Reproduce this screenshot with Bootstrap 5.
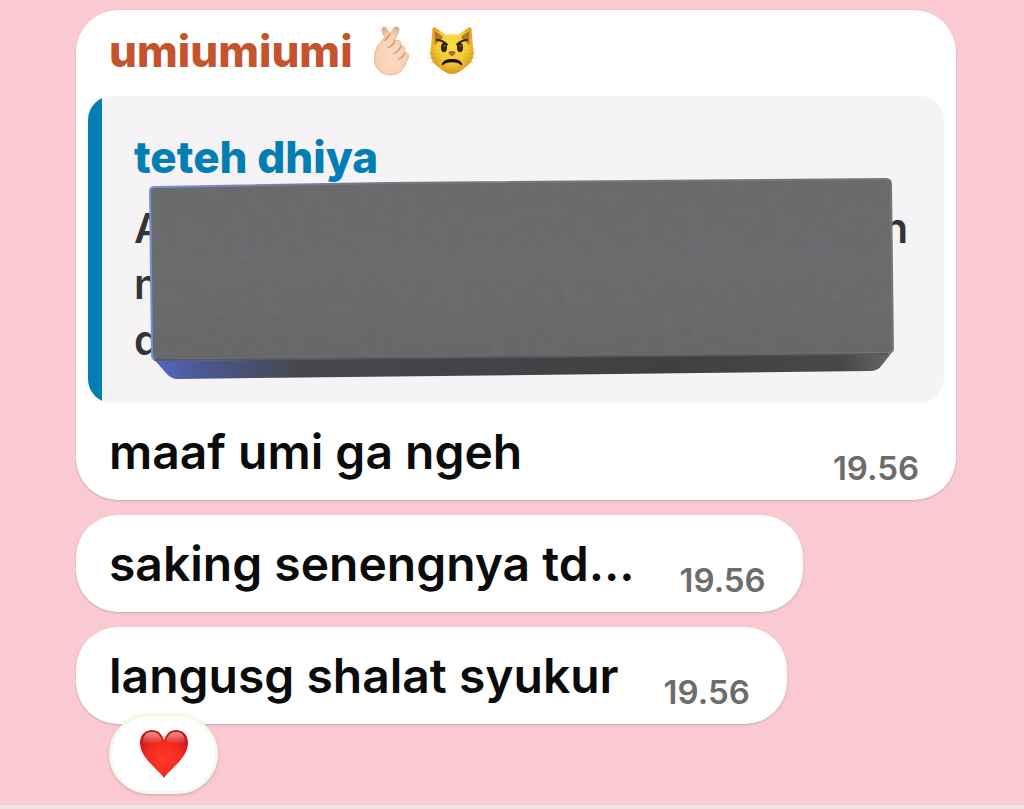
<!DOCTYPE html>
<html lang="id">
<head>
<meta charset="utf-8">
<meta name="viewport" content="width=device-width, initial-scale=1">
<title>Chat</title>
<link href="https://cdn.jsdelivr.net/npm/bootstrap@5.3.0/dist/css/bootstrap.min.css" rel="stylesheet">
<style>
  body { background: #fbc9d2; font-family: Inter, "Liberation Sans", sans-serif; color: #0b0b0b; }
  .chat { padding: 10px 68px 11px 76px; gap: 15px; }
  .bubble { background: #fff; border-radius: 42px; box-shadow: 0 1px 2px rgba(120, 70, 90, .3); max-width: 100%; }
  .sender { color: #c5532e; font-size: 44px; line-height: 52px; font-weight: 800; padding: 15px 33px 19px; gap: 20px; }
  .sender .emoji { gap: 16px; }
  .quote { background: #f5f3f5; border-radius: 24px; margin: 0 12px; padding: 35px 36px 35px 46px; overflow: hidden; }
  .quote::before { content: ""; position: absolute; left: 0; top: 0; bottom: 0; width: 14px; background: #027eb5; }
  .quote-name { color: #027eb5; font-size: 44px; line-height: 52px; font-weight: 800; margin-bottom: 17px; }
  .quote-text { color: #343336; font-size: 41px; line-height: 56px; font-weight: 600; }
  .redaction { position: absolute; left: 60px; top: 80px; width: calc(100% - 108px); height: 204px; }
  .line { padding: 19px 34px 18px 33px; gap: 42px; }
  .message { font-size: 48px; line-height: 60px; font-weight: 600; }
  .stamp { color: #6c6c6c; font-size: 33px; line-height: 28px; font-weight: 600; min-width: 92px; text-align: center; }
  .reaction { margin: -10px 0 0 33px; width: 109px; height: 80px; border: 3px solid #f5fae6; border-radius: 40px; background: #fff; box-shadow: 0 1px 3px rgba(120, 70, 90, .3); }
  .composer-edge { height: 4px; background: #eee3e3; }
</style>
</head>
<body class="d-flex flex-column min-vh-100">
<main class="chat d-flex flex-column align-items-start">
  <article class="bubble w-100">
    <header class="sender d-flex align-items-center">
      <span>umiumiumi</span>
      <span class="emoji d-flex align-items-center">
        <svg width="38" height="52" viewBox="0 0 38 52" role="img" aria-label="Finger heart">
          <defs><radialGradient id="skin" cx=".5" cy=".6" r=".6"><stop offset="0" stop-color="#fcdcc3"/><stop offset=".75" stop-color="#f8cfb3"/><stop offset="1" stop-color="#e2a888"/></radialGradient></defs>
          <path d="M9 4C9.500 1.500 12.500 1.500 13.500 3.500l3.500 5.500 4-6c2-2 5-1.200 5 1.200 0 1.500-.6 2.800-1.200 4.300l-3.300 7.500c2-1.200 5-.8 6.300 1.200.7 1.300.6 2.300.2 3.500 2 0 3.700 1.200 3.900 3.400l-.4 3c2.500 0 4.400 1.800 4.100 4.200-.4 2.500-1.500 4-2.300 6C31 45 25 50.500 16.500 50 7.500 49.500 1.500 43 1.500 34c0-6 1.500-10 4-14.500L12 12C10 9.500 8.500 7 9 4Z" fill="url(#skin)" stroke="#e3ac8b" stroke-width=".8"/>
          <path d="M17 9l-5 6.500M21.500 16c-1 3.500-3 5.500-6.500 6.500m13-1.500c-1.500 4-4 6.500-7.500 7.500m11-.5c-1 3-3 5-6 6" fill="none" stroke="#d6946f" stroke-width="1.300" stroke-linecap="round"/>
        </svg>
        <svg width="50" height="50" viewBox="0 0 50 50" role="img" aria-label="Pouting cat">
          <defs><radialGradient id="fur" cx=".5" cy=".4" r=".62"><stop offset="0" stop-color="#fde047"/><stop offset=".6" stop-color="#f5c733"/><stop offset="1" stop-color="#d3921b"/></radialGradient></defs>
          <path d="M5.500 3C6 1 7.500 1 9 2l10 7c4-1 8-1 12 0l10-7c1.500-1 3-1 3.500 1l1.500 18c2 10-1 16-8 20.500C34 45 30 48 25 48s-9-3-13-6.500C5 37 2 31 4 21Z" fill="url(#fur)"/>
          <path d="M7.500 5l9 6-9 8zM42.500 5l-9 6 9 8z" fill="#b5761f"/>
          <path d="M14 12c5-3 17-3 22 0-2-2-6-4-11-4s-9 2-11 4Z" fill="#fbe06a"/>
          <ellipse cx="17" cy="21.500" rx="3" ry="4.800" fill="#30230f"/><ellipse cx="33" cy="21.500" rx="3" ry="4.800" fill="#30230f"/>
          <circle cx="17.500" cy="20" r="1" fill="#957341"/><circle cx="33.500" cy="20" r="1" fill="#957341"/>
          <path d="M10 14c3 0 7 1.500 10 4.500M40 14c-3 0-7 1.500-10 4.500" fill="none" stroke="#2f210d" stroke-width="1.800" stroke-linecap="round"/>
          <path d="M21.500 26c1-1.500 6-1.500 7 0 .5 1.500-2 4-3.500 4s-4-2.500-3.500-4Z" fill="#a86b37"/>
          <path d="M15.500 38.500C17 32 33 32 34.500 38.500 31 34.500 19 34.500 15.500 38.500Z" fill="#171006" stroke="#171006" stroke-width="1.400" stroke-linejoin="round"/>
          <path d="M14 29L1 27m13 5L0 32m14 2L3 37m33-8l13-2m-13 5h14m-14 2l11 3" stroke="#9e873f" stroke-opacity=".4" stroke-width=".8"/>
        </svg>
      </span>
    </header>
    <blockquote class="quote position-relative">
      <div class="quote-name">teteh dhiya</div>
      <div class="quote-text">
        <div class="d-flex justify-content-between"><span>A</span><span>n</span></div>
        <div>n</div>
        <div>d</div>
      </div>
      <svg class="redaction" viewBox="0 0 748 204" preserveAspectRatio="none" aria-hidden="true">
        <defs>
          <linearGradient id="face" x1="0" y1="0" x2="0" y2="1"><stop offset="0" stop-color="#6a6a6c"/><stop offset=".5" stop-color="#6b6b6e"/><stop offset="1" stop-color="#676769"/></linearGradient>
          <linearGradient id="side"><stop offset="0" stop-color="#5268c8"/><stop offset=".06" stop-color="#4c5994"/><stop offset=".2" stop-color="#46474c"/><stop offset=".7" stop-color="#404042"/><stop offset=".93" stop-color="#48484a"/><stop offset="1" stop-color="#68686a"/></linearGradient>
          <linearGradient id="rim"><stop offset="0" stop-color="#7790df"/><stop offset=".3" stop-color="#77787f"/><stop offset="1" stop-color="#77777a"/></linearGradient>
          <filter id="grain" x="0" y="0" width="1" height="1"><feTurbulence type="fractalNoise" baseFrequency=".07" numOctaves="3" seed="4"/><feColorMatrix values="0 0 0 0 .25  0 0 0 0 .25  0 0 0 0 .28  0 .5 0 0 -.2"/><feComposite in2="SourceGraphic" operator="in"/></filter>
        </defs>
        <path d="M4 181L18 197Q23 203 30 203L722 195Q730 195 734 189L745 175Z" fill="url(#side)"/>
        <path d="M2 15Q2 11 7 11L240 7 738 3Q743 3 743 8L745 173Q745 176 740 177L10 184Q4 184 4 179Z" fill="url(#face)" stroke="url(#rim)" stroke-width="2"/>
        <path d="M4 15L240 9 740 5 743 174 6 182Z" fill="#000" filter="url(#grain)" opacity=".5"/>
        <path d="M6 184L740 178" stroke="#58585b" stroke-width="2"/>
      </svg>
    </blockquote>
    <div class="line d-flex align-items-end justify-content-between">
      <span class="message">maaf umi ga ngeh</span><time class="stamp" datetime="19:56">19.56</time>
    </div>
  </article>

  <article class="bubble line d-flex align-items-end">
    <span class="message">saking senengnya td...</span><time class="stamp" datetime="19:56">19.56</time>
  </article>

  <div>
    <article class="bubble line d-flex align-items-end">
      <span class="message">langusg shalat syukur</span><time class="stamp" datetime="19:56">19.56</time>
    </article>
    <button type="button" class="reaction d-flex align-items-center justify-content-center position-relative p-0" aria-label="Red heart reaction">
      <svg width="50" height="50" viewBox="0 0 50 50" aria-hidden="true">
        <defs>
          <radialGradient id="heart" cx=".5" cy=".6" r=".6"><stop offset="0" stop-color="#ff3a26"/><stop offset=".6" stop-color="#f22a20"/><stop offset="1" stop-color="#c9181d"/></radialGradient>
          <linearGradient id="shine" x1="0" y1="0" x2="0" y2="1"><stop offset="0" stop-color="#fff" stop-opacity=".55"/><stop offset="1" stop-color="#fff" stop-opacity="0"/></linearGradient>
        </defs>
        <path d="M25 49C20 41 1 29 1 14 1 6 6 1 13 1c6 0 10 4 12 10C27 5 31 1 37 1c7 0 12 5 12 13 0 15-19 27-24 35Z" fill="url(#heart)"/>
        <path d="M4 13C4 6 8 3 13 3c5 0 8 3 9.500 8C18 15 8 17 4 13ZM46 13c0-7-4-10-9-10-5 0-8 3-9.500 8C32 15 42 17 46 13Z" fill="url(#shine)"/>
      </svg>
    </button>
  </div>
</main>
<div class="composer-edge mt-auto"></div>
<script src="https://cdn.jsdelivr.net/npm/bootstrap@5.3.0/dist/js/bootstrap.bundle.min.js"></script>
</body>
</html>
